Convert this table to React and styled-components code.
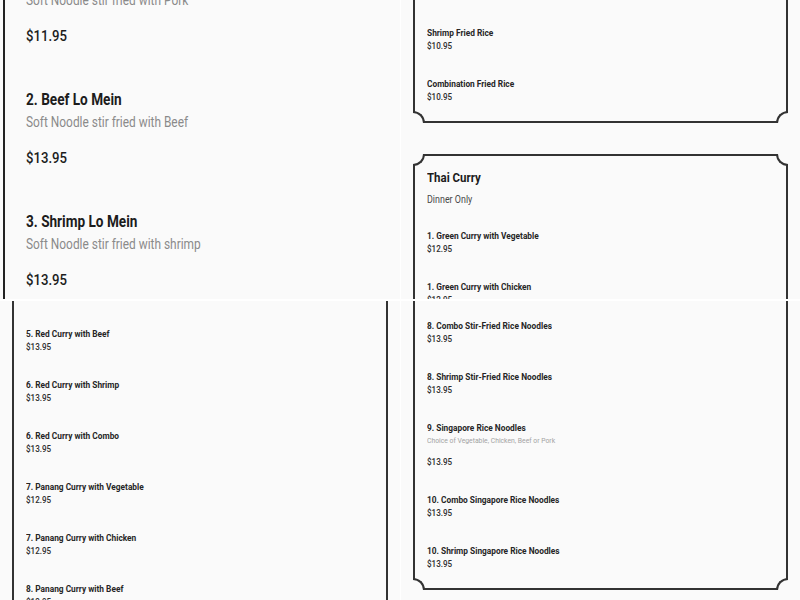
import React from "react";
import styled, { createGlobalStyle, css } from "styled-components";

const GlobalStyle = createGlobalStyle`
  html, body {
    margin: 0;
    padding: 0;
    background: #ffffff;
  }
  body {
    font-family: "Roboto", "Liberation Sans", sans-serif;
    color: #222;
  }
`;

// the screenshots are squeezed a bit sideways, so the type is too
const squeeze = css`
  transform: scaleX(0.85);
  transform-origin: left center;
  white-space: nowrap;
`;

const Collage = styled.div`
  display: grid;
  grid-template-columns: 400px 399px;
  grid-template-rows: 299px 299px;
  column-gap: 1px;
  row-gap: 2px;
  width: 800px;
  height: 600px;
  background: #ffffff;
`;

const Panel = styled.div`
  overflow: hidden;
  background: #fafafa;
`;

/* big phone view, top left */
const BigCard = styled.div`
  margin: -11px 0 0 3px;
  padding-left: 21px;
  border-left: 2px solid #222;
  min-height: 320px;
  display: flex;
  flex-direction: column;
  gap: 42px;
`;

const BigItem = styled.div`
  display: flex;
  flex-direction: column;
`;

const BigTitle = styled.div`
  ${squeeze}
  font-size: 16px;
  font-weight: 700;
  line-height: 22px;
  color: #1c1c1c;
`;

const BigDesc = styled.div`
  ${squeeze}
  font-size: 14px;
  line-height: 22px;
  color: #8a8a8a;
`;

const BigPrice = styled.div`
  ${squeeze}
  margin-top: 14px;
  font-size: 15.5px;
  font-weight: 500;
  line-height: 22px;
  color: #1c1c1c;
`;

/* ticket style cards */
const notchBottom = css`
  &::before {
    left: -2px;
    bottom: -2px;
    border-top: 2px solid #333;
    border-right: 2px solid #333;
    border-top-right-radius: 12px;
  }
  &::after {
    right: -2px;
    bottom: -2px;
    border-top: 2px solid #333;
    border-left: 2px solid #333;
    border-top-left-radius: 12px;
  }
`;

const notchTop = css`
  &::before {
    left: -2px;
    top: -2px;
    border-bottom: 2px solid #333;
    border-right: 2px solid #333;
    border-bottom-right-radius: 12px;
  }
  &::after {
    right: -2px;
    top: -2px;
    border-bottom: 2px solid #333;
    border-left: 2px solid #333;
    border-bottom-left-radius: 12px;
  }
`;

const Card = styled.section`
  position: relative;
  margin: ${(p) => p.$gapTop || 0}px 12px 0;
  padding: ${(p) => p.$padTop}px 12px ${(p) => p.$padBottom || 0}px;
  border: 2px solid #333;
  ${(p) => p.$openTop && "border-top: none;"}
  ${(p) => p.$openBottom && "border-bottom: none; min-height: 320px;"}
  background: #fafafa;

  ${(p) =>
    p.$notch &&
    css`
      &::before,
      &::after {
        content: "";
        position: absolute;
        width: 12px;
        height: 12px;
        box-sizing: border-box;
        background: #fafafa;
      }
    `}
  ${(p) => p.$notch === "bottom" && notchBottom}
  ${(p) => p.$notch === "top" && notchTop}
`;

const SectionTitle = styled.h2`
  ${squeeze}
  margin: 0;
  font-size: 13.5px;
  font-weight: 700;
  line-height: 20px;
  color: #1c1c1c;
`;

const SectionNote = styled.div`
  ${squeeze}
  margin-top: 6px;
  font-size: 10.5px;
  line-height: 14px;
  color: #4a4a4a;
`;

const ItemList = styled.div`
  display: flex;
  flex-direction: column;
  gap: 25px;
  margin-top: ${(p) => p.$top || 0}px;
`;

const Item = styled.div`
  display: flex;
  flex-direction: column;
`;

const ItemTitle = styled.div`
  ${squeeze}
  font-size: 9.8px;
  font-weight: 700;
  line-height: 13px;
  color: #262626;
`;

const ItemDesc = styled.div`
  ${squeeze}
  font-size: 8px;
  line-height: 13px;
  color: #a3a3a3;
`;

const ItemPrice = styled.div`
  ${squeeze}
  margin-top: ${(p) => (p.$spaced ? 8 : 0)}px;
  font-size: 9.5px;
  font-weight: 500;
  line-height: 13px;
  color: #2e2e2e;
`;

const loMein = [
  { desc: "Soft Noodle stir fried with Pork", price: "$11.95" },
  { title: "2. Beef Lo Mein", desc: "Soft Noodle stir fried with Beef", price: "$13.95" },
  { title: "3. Shrimp Lo Mein", desc: "Soft Noodle stir fried with shrimp", price: "$13.95" },
];

const friedRice = [
  { title: "Shrimp Fried Rice", price: "$10.95" },
  { title: "Combination Fried Rice", price: "$10.95" },
];

const greenCurry = [
  { title: "1. Green Curry with Vegetable", price: "$12.95" },
  { title: "1. Green Curry with Chicken", price: "$12.95" },
];

const redCurry = [
  { title: "5. Red Curry with Beef", price: "$13.95" },
  { title: "6. Red Curry with Shrimp", price: "$13.95" },
  { title: "6. Red Curry with Combo", price: "$13.95" },
  { title: "7. Panang Curry with Vegetable", price: "$12.95" },
  { title: "7. Panang Curry with Chicken", price: "$12.95" },
  { title: "8. Panang Curry with Beef", price: "$13.95" },
];

const noodles = [
  { title: "8. Combo Stir-Fried Rice Noodles", price: "$13.95" },
  { title: "8. Shrimp Stir-Fried Rice Noodles", price: "$13.95" },
  {
    title: "9. Singapore Rice Noodles",
    desc: "Choice of Vegetable, Chicken, Beef or Pork",
    price: "$13.95",
  },
  { title: "10. Combo Singapore Rice Noodles", price: "$13.95" },
  { title: "10. Shrimp Singapore Rice Noodles", price: "$13.95" },
];

const MenuItems = ({ items, top }) => (
  <ItemList $top={top}>
    {items.map((item) => (
      <Item key={item.title}>
        <ItemTitle>{item.title}</ItemTitle>
        {item.desc && <ItemDesc>{item.desc}</ItemDesc>}
        <ItemPrice $spaced={!!item.desc}>{item.price}</ItemPrice>
      </Item>
    ))}
  </ItemList>
);

const App = () => {
  return (
    <>
      <GlobalStyle />
      <Collage>
        <Panel>
          <BigCard>
            {loMein.map((item) => (
              <BigItem key={item.desc}>
                {item.title && <BigTitle>{item.title}</BigTitle>}
                <BigDesc>{item.desc}</BigDesc>
                <BigPrice>{item.price}</BigPrice>
              </BigItem>
            ))}
          </BigCard>
        </Panel>

        <Panel>
          <Card $openTop $notch="bottom" $padTop={26} $padBottom={18}>
            <MenuItems items={friedRice} />
          </Card>
          <Card $openBottom $notch="top" $gapTop={31} $padTop={11}>
            <SectionTitle>Thai Curry</SectionTitle>
            <SectionNote>Dinner Only</SectionNote>
            <MenuItems items={greenCurry} top={22} />
          </Card>
        </Panel>

        <Panel>
          <Card $openTop $openBottom $padTop={26}>
            <MenuItems items={redCurry} />
          </Card>
        </Panel>

        <Panel>
          <Card $openTop $notch="bottom" $padTop={18} $padBottom={18}>
            <MenuItems items={noodles} />
          </Card>
        </Panel>
      </Collage>
    </>
  );
};

export default App;
